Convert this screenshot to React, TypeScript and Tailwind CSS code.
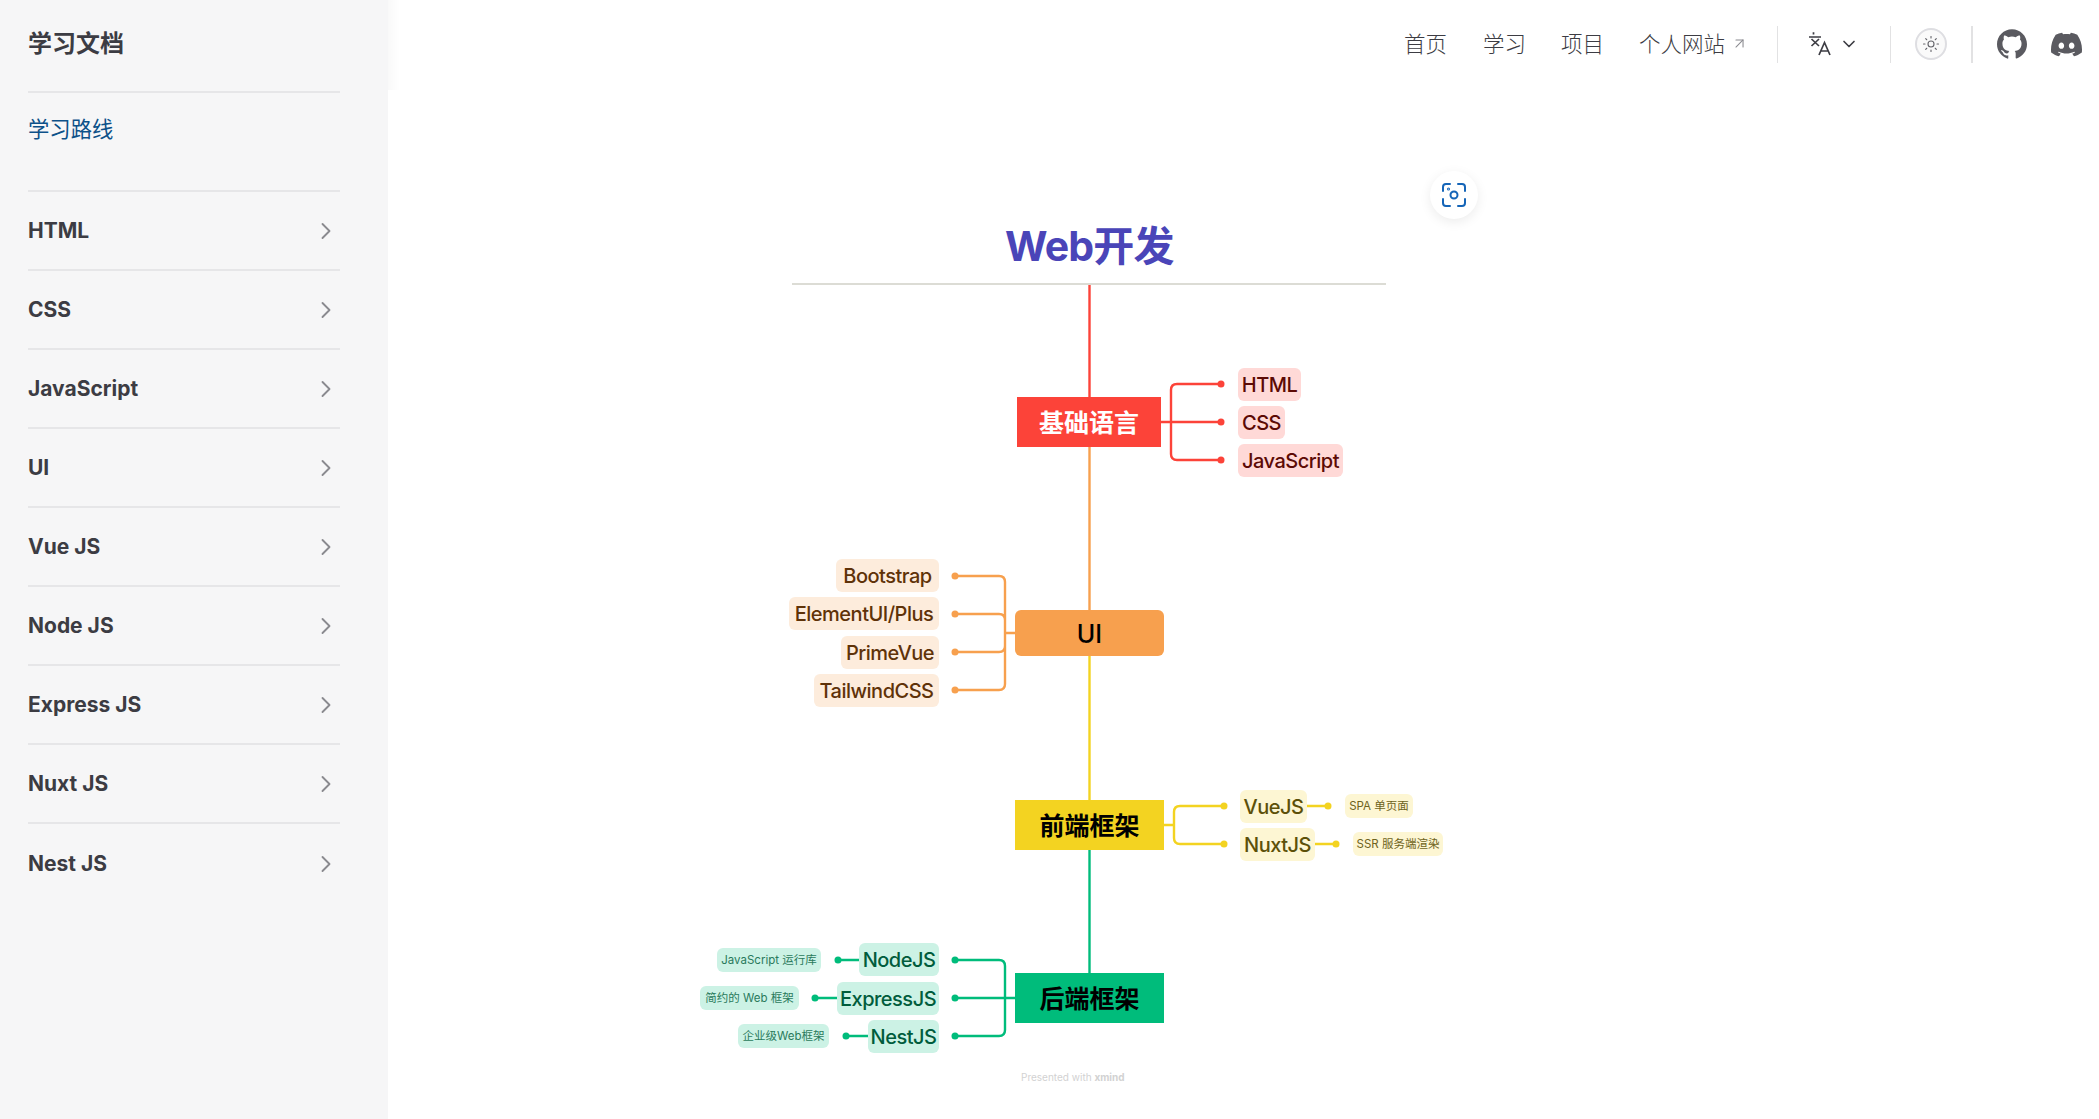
import React from "react";
import { ChevronRight, ChevronDown, Sun, ArrowUpRight } from "lucide-react";
import { SiGithub, SiDiscord } from "react-icons/si";

const sidebarItems = ["HTML", "CSS", "JavaScript", "UI", "Vue JS", "Node JS", "Express JS", "Nuxt JS", "Nest JS"];
const navLinks = [
  { t: "首页", c: "w-[79px]" },
  { t: "学习", c: "w-[78px]" },
  { t: "项目", c: "w-[78px]" },
];

const CJK = "font-['Inter','Noto_Sans_CJK_SC',sans-serif]";

type N = { t: string; x: number; y: number; w: number; h: number; bg: string; fg: string; sub?: boolean };

const RED = "#fc4339", ORG = "#f7a04e", YEL = "#f3d321", GRN = "#00bc7b";
const nodes: N[] = [
  { t: "HTML", x: 1238, y: 368, w: 63, h: 33, bg: "#ffd9d7", fg: "#5c0a05" },
  { t: "CSS", x: 1238, y: 406, w: 47, h: 33, bg: "#ffd9d7", fg: "#5c0a05" },
  { t: "JavaScript", x: 1238, y: 444, w: 105, h: 33, bg: "#ffd9d7", fg: "#5c0a05" },
  { t: "Bootstrap", x: 836, y: 559, w: 103, h: 33, bg: "#fdecdc", fg: "#5f3208" },
  { t: "ElementUI/Plus", x: 789, y: 597, w: 150, h: 33, bg: "#fdecdc", fg: "#5f3208" },
  { t: "PrimeVue", x: 841, y: 636, w: 98, h: 33, bg: "#fdecdc", fg: "#5f3208" },
  { t: "TailwindCSS", x: 814, y: 674, w: 125, h: 33, bg: "#fdecdc", fg: "#5f3208" },
  { t: "VueJS", x: 1240, y: 790, w: 67, h: 33, bg: "#fdf6d3", fg: "#5c5009" },
  { t: "NuxtJS", x: 1240, y: 828, w: 75, h: 33, bg: "#fdf6d3", fg: "#5c5009" },
  { t: "SPA 单页面", x: 1345, y: 794, w: 68, h: 24, bg: "#fdf6d3", fg: "#6e6320", sub: true },
  { t: "SSR 服务端渲染", x: 1353, y: 832, w: 90, h: 24, bg: "#fdf6d3", fg: "#6e6320", sub: true },
  { t: "NodeJS", x: 859, y: 943, w: 80, h: 33, bg: "#ccf2e5", fg: "#005c3c" },
  { t: "ExpressJS", x: 837, y: 982, w: 102, h: 33, bg: "#ccf2e5", fg: "#005c3c" },
  { t: "NestJS", x: 868, y: 1020, w: 71, h: 33, bg: "#ccf2e5", fg: "#005c3c" },
  { t: "JavaScript 运行库", x: 717, y: 948, w: 104, h: 24, bg: "#ccf2e5", fg: "#2a7a5c", sub: true },
  { t: "简约的 Web 框架", x: 700, y: 986, w: 99, h: 24, bg: "#ccf2e5", fg: "#2a7a5c", sub: true },
  { t: "企业级Web框架", x: 738, y: 1024, w: 91, h: 24, bg: "#ccf2e5", fg: "#2a7a5c", sub: true },
];

const mains = [
  { t: "基础语言", x: 1017, y: 397, w: 144, h: 50, bg: RED, fg: "#ffffff", r: 0, weight: 700 },
  { t: "UI", x: 1015, y: 610, w: 149, h: 46, bg: ORG, fg: "#000000", r: 6, weight: 500 },
  { t: "前端框架", x: 1015, y: 800, w: 149, h: 50, bg: YEL, fg: "#000000", r: 0, weight: 700 },
  { t: "后端框架", x: 1015, y: 973, w: 149, h: 50, bg: GRN, fg: "#000000", r: 0, weight: 700 },
];

const lines: { d: string; c: string }[] = [
  { d: "M1089.5 285V397", c: RED },
  { d: "M1089.5 447V610", c: ORG },
  { d: "M1089.5 656V800", c: YEL },
  { d: "M1089.5 850V973", c: GRN },
  { d: "M1161 422H1221M1171 422V390Q1171 384 1177 384H1221M1171 422V454Q1171 460 1177 460H1221", c: RED },
  { d: "M1015 633H1005M955 576H999Q1005 576 1005 582V684Q1005 690 999 690H955M955 614H999Q1005 614 1005 620V646Q1005 652 999 652H955", c: ORG },
  { d: "M1164 825H1174M1174 825V812Q1174 806 1180 806H1224M1174 825V838Q1174 844 1180 844H1224M1307 806H1328M1315 844H1336", c: YEL },
  { d: "M1015 998H955M955 960H999Q1005 960 1005 966V1030Q1005 1036 999 1036H955M859 960H838M837 998H815M868 1036H846", c: GRN },
];
const dots: [number, number, string][] = [
  [1221, 384, RED], [1221, 422, RED], [1221, 460, RED],
  [955, 576, ORG], [955, 614, ORG], [955, 652, ORG], [955, 690, ORG],
  [1224, 806, YEL], [1224, 844, YEL], [1328, 806, YEL], [1336, 844, YEL],
  [955, 960, GRN], [955, 998, GRN], [955, 1036, GRN], [838, 960, GRN], [815, 998, GRN], [846, 1036, GRN],
];

export default function App() {
  return (
    <div className={`relative flex h-[1119px] w-[2099px] overflow-hidden bg-white text-[#3c3c43] ${CJK}`}>
      <aside className="relative flex w-[388px] shrink-0 flex-col bg-[#f6f6f7] pl-[28px] pr-[48px]">
        <div className="flex h-[93px] items-center border-b-2 border-[#e6e6e8] pb-[4px] text-[24px] font-bold">学习文档</div>
        <div className="flex h-[99px] items-center border-b-2 border-[#e6e6e8] pb-[23px] text-[21.33px] text-[#0d5189]">学习路线</div>
        <div className="flex flex-col">
          {sidebarItems.map((s) => (
            <div key={s} className="flex h-[79px] items-center justify-between border-b-2 border-[#e6e6e8] text-[21px] font-bold last:border-b-0">
              <span>{s}</span>
              <ChevronRight size={28} strokeWidth={1.6} className="text-[#8a8a8f]" />
            </div>
          ))}
        </div>
        <div className="absolute left-[388px] top-0 h-[90px] w-[12px] bg-gradient-to-r from-[#f9f9f9] to-white" />
      </aside>

      <main className="relative min-w-0 flex-1">
        <nav className="flex h-[88px] items-center justify-end pr-[17px] text-[21.5px]">
          <div className="flex items-center pb-[2px] font-['Noto_Sans_CJK_SC',sans-serif] font-light">
            {navLinks.map((n) => (
              <span key={n.t} className={n.c}>{n.t}</span>
            ))}
            <span>个人网站</span>
            <ArrowUpRight size={17} strokeWidth={1.5} className="ml-[6px] text-[#8a8a8f]" />
          </div>
          <div className="ml-[29px] h-[37px] w-px bg-[#e2e2e3]" />
          <svg width="24" height="24" viewBox="0 0 24 24" fill="none" stroke="#3c3c43" strokeWidth="1.7" className="ml-[31px]">
            <path d="M4.5 0.2v2.2M0 5h12M2.5 7l7.5 7M10 7l-7.5 7M10 23l5.5-12.5L21 23M11.8 19h7.4" />
          </svg>
          <ChevronDown size={20} strokeWidth={2} className="ml-[6px] text-[#3c3c43]" />
          <div className="ml-[31px] h-[37px] w-px bg-[#e2e2e3]" />
          <div className="ml-[24px] flex h-[32px] w-[32px] items-center justify-center rounded-full border-2 border-[#dedee2] bg-[#fafafa]">
            <Sun size={18} strokeWidth={1.5} className="text-[#66666c]" />
          </div>
          <div className="ml-[24px] h-[37px] w-[2px] bg-[#e2e2e3]" />
          <SiGithub size={30} className="ml-[24px] text-[#5a5a60]" />
          <SiDiscord size={31} className="ml-[24px] text-[#5a5a60]" />
        </nav>

        <div className="absolute -left-[388px] top-0 h-[1119px] w-[2099px]">
          <svg width="2099" height="1119" className="absolute left-0 top-0">
            <line x1="792" y1="284" x2="1386" y2="284" stroke="#dcdcd5" strokeWidth="2" />
            {lines.map((l, i) => (
              <path key={i} d={l.d} fill="none" stroke={l.c} strokeWidth="2.4" />
            ))}
            {dots.map(([x, y, c], i) => (
              <circle key={i} cx={x} cy={y} r="3.5" fill={c} />
            ))}
          </svg>

          <div className="absolute left-[1005px] top-[222px] text-[41px] font-bold leading-[48px] tracking-[-0.8px] text-[#4a45b8]">Web开发</div>

          {mains.map((m) => (
            <div
              key={m.t}
              className="absolute flex items-center justify-center pt-[3px] text-[25px]"
              style={{ left: m.x, top: m.y, width: m.w, height: m.h, background: m.bg, color: m.fg, borderRadius: m.r, fontWeight: m.weight }}
            >
              {m.t}
            </div>
          ))}

          {nodes.map((n) => (
            <div
              key={n.t}
              className={
                n.sub
                  ? "absolute flex items-center justify-center whitespace-nowrap rounded-[6px] pt-[1px] text-[11.5px]"
                  : "absolute flex items-center justify-center whitespace-nowrap rounded-[6px] text-[20px] font-medium tracking-[-0.5px]"
              }
              style={{ left: n.x, top: n.y, width: n.w, height: n.h, background: n.bg, color: n.fg }}
            >
              {n.t}
            </div>
          ))}

          <div className="absolute left-[1021px] top-[1069px] text-[10px] leading-[16px] text-[#d2d2d2]">
            Presented with <span className="font-bold">xmind</span>
          </div>

          <div className="absolute left-[1430px] top-[171px] flex h-[48px] w-[48px] items-center justify-center rounded-full bg-white shadow-[0_3px_12px_rgba(0,0,0,0.08)]">
            <svg width="26" height="26" viewBox="0 0 26 26" fill="none" stroke="#1565b8" strokeWidth="2" strokeLinecap="round">
              <path d="M2 9V5a3 3 0 0 1 3-3h4M17 2h4a3 3 0 0 1 3 3v4M24 17v4a3 3 0 0 1-3 3h-4M9 24H5a3 3 0 0 1-3-3v-4" />
              <circle cx="13" cy="13" r="3.5" />
              <circle cx="7.5" cy="7" r="0.5" />
            </svg>
          </div>
        </div>
      </main>
    </div>
  );
}
